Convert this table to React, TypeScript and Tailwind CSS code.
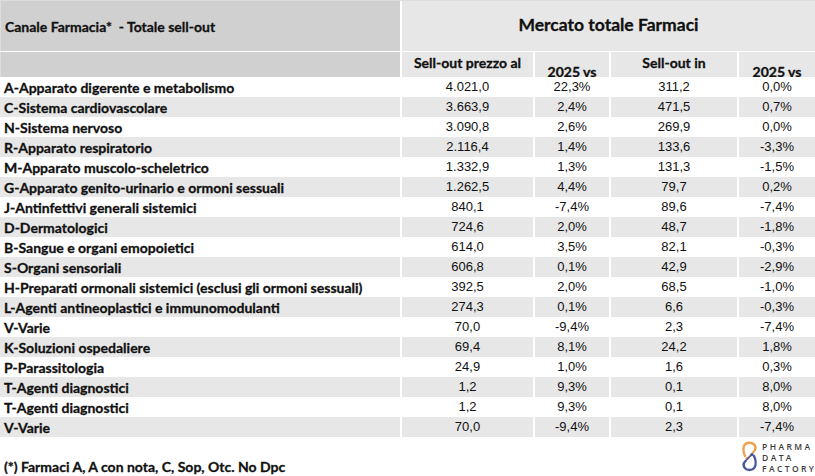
import React from "react";

const rows: [string, string, string, string, string][] = [
  ["A-Apparato digerente e metabolismo", "4.021,0", "22,3%", "311,2", "0,0%"],
  ["C-Sistema cardiovascolare", "3.663,9", "2,4%", "471,5", "0,7%"],
  ["N-Sistema nervoso", "3.090,8", "2,6%", "269,9", "0,0%"],
  ["R-Apparato respiratorio", "2.116,4", "1,4%", "133,6", "-3,3%"],
  ["M-Apparato muscolo-scheletrico", "1.332,9", "1,3%", "131,3", "-1,5%"],
  ["G-Apparato genito-urinario e ormoni sessuali", "1.262,5", "4,4%", "79,7", "0,2%"],
  ["J-Antinfettivi generali sistemici", "840,1", "-7,4%", "89,6", "-7,4%"],
  ["D-Dermatologici", "724,6", "2,0%", "48,7", "-1,8%"],
  ["B-Sangue e organi emopoietici", "614,0", "3,5%", "82,1", "-0,3%"],
  ["S-Organi sensoriali", "606,8", "0,1%", "42,9", "-2,9%"],
  ["H-Preparati ormonali sistemici (esclusi gli ormoni sessuali)", "392,5", "2,0%", "68,5", "-1,0%"],
  ["L-Agenti antineoplastici e immunomodulanti", "274,3", "0,1%", "6,6", "-0,3%"],
  ["V-Varie", "70,0", "-9,4%", "2,3", "-7,4%"],
  ["K-Soluzioni ospedaliere", "69,4", "8,1%", "24,2", "1,8%"],
  ["P-Parassitologia", "24,9", "1,0%", "1,6", "0,3%"],
  ["T-Agenti diagnostici", "1,2", "9,3%", "0,1", "8,0%"],
  ["T-Agenti diagnostici", "1,2", "9,3%", "0,1", "8,0%"],
  ["V-Varie", "70,0", "-9,4%", "2,3", "-7,4%"],
];

const numCell =
  "border-l-2 border-white flex items-center justify-center text-[13px] font-['Liberation_Sans',Arial,sans-serif]";
const lab = "font-['Lato','Noto_Sans',sans-serif] font-bold [-webkit-text-stroke:0.3px]";

export default function App() {
  return (
    <div className="relative w-[815px] h-[476px] bg-white overflow-hidden text-[#111]">
      {/* header row 1 */}
      <div className="flex h-[52px] border-t border-[#dcdcdc] border-b border-b-white">
        <div className={`w-[400px] bg-[#d0d0d0] flex items-center pl-[4px] text-[14px] border-l border-[#dedede] ${lab}`}>
          Canale Farmacia*&nbsp; - Totale sell-out
        </div>
        <div className={`flex-1 bg-[#e7e7e7] border-l-2 border-white flex items-center justify-center text-[17.5px] pb-[1px] ${lab}`}>
          Mercato totale Farmaci
        </div>
      </div>
      {/* header row 2 */}
      <div className={`flex h-[25px] text-[14px] leading-[16px] ${lab}`}>
        <div className="w-[400px] bg-[#d0d0d0] border-l border-[#dedede]" />
        <div className="w-[133px] bg-[#e7e7e7] border-l-2 border-white text-center pt-[3px]">
          Sell-out prezzo al
        </div>
        <div className="w-[76px] h-[25px] bg-[#e7e7e7] border-l-2 border-white text-center pt-[12px] overflow-hidden">
          <div className="h-[13px] overflow-hidden">2025 vs</div>
        </div>
        <div className="w-[128px] bg-[#e7e7e7] border-l-2 border-white text-center pt-[3px]">
          Sell-out in
        </div>
        <div className="flex-1 h-[25px] bg-[#e7e7e7] border-l-2 border-white text-center pt-[12px] overflow-hidden">
          <div className="h-[13px] overflow-hidden">2025 vs</div>
        </div>
      </div>
      {/* data rows */}
      {rows.map((r, i) => (
        <div key={i} className={`flex h-[20px] items-stretch ${i % 2 === 1 ? "bg-[#e7e7e7]" : "bg-white"}`}>
          <div className={`w-[400px] pl-[4px] flex items-center text-[14px] ${lab}`}>{r[0]}</div>
          <div className={`w-[133px] ${numCell}`}>{r[1]}</div>
          <div className={`w-[76px] ${numCell}`}>{r[2]}</div>
          <div className={`w-[128px] ${numCell}`}>{r[3]}</div>
          <div className={`flex-1 ${numCell}`}>{r[4]}</div>
        </div>
      ))}
      {/* footer */}
      <div className={`pl-[4px] pt-[19px] text-[14px] ${lab}`}>
        (*) Farmaci A, A con nota, C, Sop, Otc. No Dpc
      </div>
      {/* logo */}
      <div className="absolute left-[742px] top-[441px] flex items-start gap-[5px]">
        <svg width="15" height="31" viewBox="0 0 15 31">
          <path
            d="M3 15 C1 11 1 6 2.5 4 C4.5 1 10.5 1 12.5 4 C13.8 6 13.5 9 11.5 11"
            fill="none"
            stroke="#f0a050"
            strokeWidth="2.4"
            strokeLinecap="round"
          />
          <path d="M11.5 11 L5 17.5" fill="none" stroke="#f0a050" strokeWidth="1.6" />
          <circle cx="5" cy="17.5" r="1.6" fill="#f0a050" />
          <path
            d="M12 15 C14 19 14 24 12.5 26.5 C10.5 29.8 4.5 29.8 2.5 26.5 C1.2 24.5 1.5 22 3.5 20"
            fill="none"
            stroke="#46579a"
            strokeWidth="2.4"
            strokeLinecap="round"
          />
          <path d="M3.5 20 L10 13.5" fill="none" stroke="#46579a" strokeWidth="1.6" />
          <circle cx="10" cy="13.5" r="1.6" fill="#46579a" />
        </svg>
        <div className="flex flex-col text-[8.5px] leading-[11px] tracking-[2.4px] text-[#3a3a3a] font-semibold font-['Open_Sans',sans-serif]">
          <span>PHARMA</span>
          <span>DATA</span>
          <span>FACTORY</span>
        </div>
      </div>
    </div>
  );
}
